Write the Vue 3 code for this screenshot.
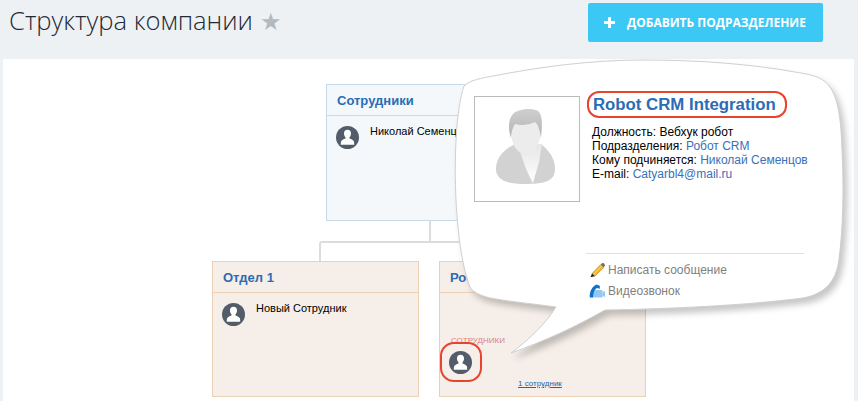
<script setup>
const personPath = 'M12 4c-2.4 0-3.7 1.7-3.7 3.9 0 1.6.6 3 1.6 3.9v1.3c-1.9.7-4.1 1.5-4.6 3-.2.7-.3 1.7-.3 3.4h14c0-1.7-.1-2.7-.3-3.4-.5-1.5-2.7-2.3-4.6-3v-1.3c1-.9 1.6-2.3 1.6-3.9C15.7 5.7 14.4 4 12 4z'
const details = [
  { label: 'Должность:', value: 'Вебхук робот', link: false },
  { label: 'Подразделения:', value: 'Робот CRM', link: true },
  { label: 'Кому подчиняется:', value: 'Николай Семенцов', link: true },
  { label: 'E-mail:', value: 'Catyarbl4@mail.ru', link: true },
]
</script>

<template>
  <div class="page">
    <header class="topbar">
      <h1 class="title">Структура компании <span class="star">★</span></h1>
      <button class="add-btn"><span class="plus"></span>ДОБАВИТЬ ПОДРАЗДЕЛЕНИЕ</button>
    </header>

    <main class="panel">
      <!-- connectors of the org chart -->
      <div class="line-stem"></div>
      <div class="line-branch"></div>

      <section class="card card-top">
        <div class="card-head">Сотрудники</div>
        <div class="card-body">
          <svg class="avatar" viewBox="0 0 24 24"><circle cx="12" cy="12" r="12" fill="#535c69" /><path :d="personPath" fill="#fff" /></svg>
          <span class="emp-name">Николай Семенцов</span>
        </div>
      </section>

      <section class="card card-low card-dept1">
        <div class="card-head">Отдел 1</div>
        <div class="card-body">
          <svg class="avatar" viewBox="0 0 24 24"><circle cx="12" cy="12" r="12" fill="#535c69" /><path :d="personPath" fill="#fff" /></svg>
          <span class="emp-name">Новый Сотрудник</span>
        </div>
      </section>

      <section class="card card-low card-dept2">
        <div class="card-head">Робот CRM</div>
        <div class="card-body staff">
          <div class="staff-label">СОТРУДНИКИ</div>
          <svg class="avatar" viewBox="0 0 24 24"><circle cx="12" cy="12" r="12" fill="#535c69" /><path :d="personPath" fill="#fff" /></svg>
          <span class="staff-count">1 сотрудник</span>
        </div>
      </section>

      <div class="avatar-mark"></div>

      <!-- speech bubble popup -->
      <div class="bubble">
        <svg class="bubble-shape" viewBox="0 0 400 310" width="400" height="310">
          <path
            d="M14 27 C20 21 32 19 43 17 C90 8 140 1 193 1 C250 1 300 5 345 13 C365 16 373 19 379 27 C388 38 391 60 392 90 C394 130 393 170 389 200 C387 217 380 228 368 234 C362 237 358 238 353 239 C300 246 220 250 155 251 C125 268 95 282 61 294 C80 280 96 264 106 248 C85 245 62 243 40 239 C28 236 22 232 20 228 C13 210 8 180 6 141 C4 100 6 50 14 27 Z"
            fill="#fff"
            stroke="#cfcfcf"
            stroke-width="1"
          />
        </svg>
        <div class="bubble-main">
          <div class="photo">
            <svg viewBox="0 0 104 104" width="104" height="104">
              <defs>
                <linearGradient id="shirt" x1="0" y1="0" x2="0" y2="1">
                  <stop offset="0" stop-color="#e6e6e6" />
                  <stop offset="1" stop-color="#fff" />
                </linearGradient>
                <linearGradient id="hair" x1="0" y1="0" x2="0" y2="1">
                  <stop offset="0" stop-color="#cfcfcf" />
                  <stop offset="1" stop-color="#b4b4b4" />
                </linearGradient>
              </defs>
              <path d="M40 47C30 52 21 60 21 72 21 82 30 87 50 87 70 87 80 84 80 72 80 60 73 53 66 47z" fill="#d2d2d2" />
              <path d="M43 47h24l-3 18-6 21C52 76 47 62 43 47z" fill="url(#shirt)" />
              <path d="M35 27c0-9 9-14 18-14s13 6 13 14c0 7 0 14-3 20-3 6-6 11-11 11-6 0-12-6-14-12-2-6-3-12-3-19z" fill="#ececec" />
              <path d="M36 41c-3-8-3-19 2-24 5-5 21-7 26-2 4 4 3 17 2 26-1-7-3-14-6-16-6 3-14 4-20 2-2 3-4 9-4 14z" fill="url(#hair)" />
            </svg>
          </div>
          <div class="info">
            <div class="name"><span>Robot CRM Integration</span></div>
            <div v-for="row in details" :key="row.label" class="row">
              {{ row.label }} <span :class="{ link: row.link }">{{ row.value }}</span>
            </div>
          </div>
        </div>
        <div class="actions">
          <div class="action">
            <svg viewBox="0 0 16 16" width="16" height="16">
              <path d="M3 11.5 11.8 2.5l3 3L5.8 14.2z" fill="#edb62c" stroke="#a9790f" stroke-width=".5" />
              <path d="M5 12 12.8 4" stroke="#f8dc7a" stroke-width="1" />
              <path d="M11.8 2.5l1.3-1.2c.6-.4 1.3-.3 1.8.2l.8.9c.4.6.4 1.2 0 1.7l-1.1 1.2z" fill="#6f6f6f" />
              <path d="M3 11.5 1.5 15.3l4.3-1.1z" fill="#1f1f1f" />
            </svg>
            Написать сообщение
          </div>
          <div class="action">
            <svg viewBox="0 0 16 16" width="16" height="16">
              <path d="M6.5 7h6c.6 0 1 .4 1 1v5.5c0 .6-.4 1-1 1H4c-.6 0-1-.4-1-1 0-2.5 1-5.5 3.5-6.5z" fill="#93c8f3" />
              <path d="M13.5 9l2.5-1v6l-2.5-1z" fill="#93c8f3" />
              <path d="M.8 14.5C.2 9 3 3.5 7.5 1.5l3.3 1.2v3L8 5C5.8 6 4.2 9.5 4 14.5z" fill="#0f72c8" />
            </svg>
            Видеозвонок
          </div>
        </div>
      </div>
    </main>
  </div>
</template>

<style>
html,
body {
  margin: 0;
  overflow: hidden;
}
</style>

<style scoped>
.page {
  width: 858px;
  height: 401px;
  overflow: hidden;
  background: #eef1f4;
  font-family: "Liberation Sans", Arial, sans-serif;
}

.topbar {
  display: flex;
  align-items: flex-start;
  justify-content: space-between;
  height: 59px;
  padding: 3px 35px 0 9px;
  box-sizing: border-box;
}

.title {
  margin: 0;
  font-family: "Open Sans", sans-serif;
  font-size: 25.6px;
  font-weight: 300;
  line-height: 36px;
  color: #1f2a36;
}

.star {
  color: #b5b9bf;
  font-size: 24px;
}

.add-btn {
  display: flex;
  align-items: center;
  width: 235px;
  height: 39px;
  padding: 0 0 0 16px;
  border: none;
  border-radius: 2px;
  background: #3bc8f5;
  color: #fff;
  font-family: "Open Sans", sans-serif;
  font-size: 12px;
  font-weight: 700;
  cursor: pointer;
}

.plus {
  width: 11px;
  height: 11px;
  margin-right: 12px;
  background:
    linear-gradient(#fff, #fff) center / 100% 3px no-repeat,
    linear-gradient(#fff, #fff) center / 3px 100% no-repeat;
}

.panel {
  position: relative;
  height: 342px;
  margin: 0 4px 0 3px;
  background: #fff;
}

.line-stem {
  position: absolute;
  left: 426px;
  top: 161px;
  width: 2px;
  height: 22px;
  background: #dcdcdc;
}

.line-branch {
  position: absolute;
  left: 316px;
  top: 182px;
  width: 200px;
  height: 20px;
  box-sizing: border-box;
  border-top: 2px solid #dcdcdc;
  border-left: 2px solid #dcdcdc;
  border-top-left-radius: 3px;
}

.card {
  position: absolute;
  box-sizing: border-box;
  border: 1px solid #c9dbeb;
  background: #f4f8fb;
}

.card-top {
  left: 323px;
  top: 25px;
  width: 207px;
  height: 137px;
}

.card-low {
  top: 202px;
  width: 207px;
  height: 136px;
  border-color: #edcfb4;
  background: #f6eee8;
}

.card-dept1 {
  left: 209px;
}

.card-dept2 {
  left: 436px;
}

.card-head {
  height: 30px;
  padding-left: 10px;
  border-bottom: 1px solid #c9dbeb;
  font-size: 13px;
  font-weight: 700;
  line-height: 31px;
  color: #2b6cb5;
}

.card-low .card-head {
  border-bottom-color: #edcfb4;
}

.card-body {
  position: relative;
  display: flex;
  align-items: flex-start;
  gap: 11px;
  padding: 10px 9px;
}

.avatar {
  width: 23px;
  height: 23px;
  flex: none;
}

.emp-name {
  margin-top: -1px;
  font-size: 11px;
  line-height: 13px;
  color: #000;
}

.staff {
  display: block;
  padding: 43px 9px 0;
}

.staff-label {
  padding-left: 2px;
  font-size: 8px;
  line-height: 10px;
  color: #dc7f86;
}

.staff .avatar {
  display: block;
  margin-top: 5px;
}

.staff-count {
  position: absolute;
  left: 78px;
  top: 86px;
  font-size: 8px;
  line-height: 10px;
  color: #2067b0;
  text-decoration: underline;
}

.avatar-mark {
  position: absolute;
  left: 437px;
  top: 283px;
  width: 42px;
  height: 40px;
  box-sizing: border-box;
  border: 2px solid #e8432d;
  border-radius: 14px;
}

.bubble {
  position: absolute;
  left: 447px;
  top: 0;
  width: 400px;
  height: 310px;
}

.bubble-shape {
  position: absolute;
  left: 0;
  top: 0;
  filter: drop-shadow(4px 5px 3px rgba(0, 0, 0, 0.22));
}

.bubble-main {
  position: absolute;
  left: 24px;
  top: 37px;
  display: flex;
  gap: 7px;
}

.photo {
  width: 104px;
  height: 104px;
  border: 1px solid #bbb;
  background: #fff;
}

.info {
  margin-top: -5px;
  font-size: 12px;
  line-height: 14px;
  color: #000;
}

.name {
  margin-bottom: 7px;
  font-size: 16.8px;
  font-weight: 700;
  line-height: 21px;
  color: #2b6cb5;
}

.name span {
  display: block;
  width: fit-content;
  padding: 1px 9px 1px 4px;
  border: 2px solid #e8432d;
  border-radius: 12px;
}

.row {
  padding-left: 5px;
}

.link {
  color: #3a70b8;
}

.actions {
  position: absolute;
  left: 136px;
  top: 194px;
  width: 218px;
  padding-top: 5px;
  border-top: 1px solid #e0e0e0;
}

.action {
  display: flex;
  align-items: center;
  gap: 3px;
  height: 21px;
  padding-left: 3px;
  font-size: 12px;
  color: #808080;
}
</style>
